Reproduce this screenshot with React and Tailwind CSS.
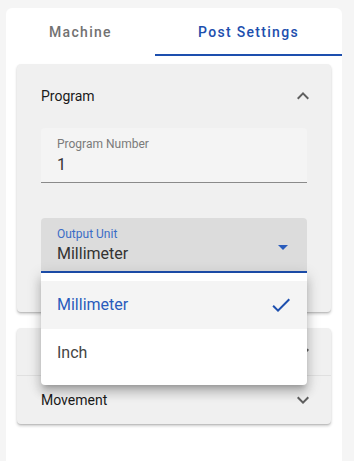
import React from "react";

const font = { fontFamily: "Roboto, 'Liberation Sans', sans-serif" };

function ChevronUp() {
  return (
    <svg width="24" height="24" viewBox="0 0 24 24" className="fill-[#5f5f5f]">
      <path d="M7.41 15.41 12 10.83l4.59 4.58L18 14l-6-6-6 6z" />
    </svg>
  );
}

function ChevronDown() {
  return (
    <svg width="24" height="24" viewBox="0 0 24 24" className="fill-[#5f5f5f]">
      <path d="M7.41 8.59 12 13.17l4.59-4.58L18 10l-6 6-6-6z" />
    </svg>
  );
}

export default function App() {
  const [unit, setUnit] = React.useState("Millimeter");

  return (
    <div className="min-h-[461px] bg-[#f5f5f5] pl-[6px] pr-[12px] pt-[8px]" style={font}>
      <div className="min-h-[453px] rounded-t-md bg-white">
        {/* tabs */}
        <div className="flex h-[48px]">
          <button className="flex w-[149px] items-center justify-center text-[14px] font-medium tracking-[1.3px] text-[#727272]">
            Machine
          </button>
          <button className="relative flex flex-1 items-center justify-center text-[14px] font-medium tracking-[1.3px] text-[#1d4fae]">
            Post Settings
            <span className="absolute bottom-0 left-0 right-0 h-[2px] bg-[#1d4fae]" />
          </button>
        </div>

        <div className="px-[11px] pt-[8px]">
          {/* Program panel */}
          <div className="rounded bg-[#f0f0f0] shadow-[0_2px_3px_rgba(0,0,0,0.2),0_1px_1px_rgba(0,0,0,0.1)]">
            <div className="flex h-[64px] items-center justify-between pl-[24px] pr-[16px]">
              <span className="text-[14px] text-[#1a1a1a]">Program</span>
              <ChevronUp />
            </div>
            <div className="px-[24px] pb-[39px]">
              <div className="h-[55px] rounded-t bg-[#f4f4f4] border-b border-[#8a8a8a] px-[16px] pt-[8px]">
                <div className="text-[12px] leading-[16px] text-[#7a7a7a]">Program Number</div>
                <div className="mt-[2px] text-[16px] leading-[22px] text-[#333]">1</div>
              </div>
              <div className="relative mt-[35px]">
                <div className="flex h-[55px] items-start justify-between rounded-t bg-[#dcdcdc] border-b-2 border-[#1d4fae] pl-[16px] pr-[12px] pt-[8px]">
                  <div>
                    <div className="text-[12px] leading-[16px] text-[#3a6cc6]">Output Unit</div>
                    <div className="mt-[1px] text-[16px] leading-[22px] text-[#333]">{unit}</div>
                  </div>
                  <svg width="24" height="24" viewBox="0 0 24 24" className="mt-[9px] fill-[#2a5cbc]">
                    <path d="M7 10l5 5 5-5z" />
                  </svg>
                </div>
                {/* menu */}
                <div className="absolute left-0 right-0 top-[55px] z-10 rounded-b bg-white py-[8px] shadow-[0_5px_5px_-3px_rgba(0,0,0,0.2),0_8px_10px_1px_rgba(0,0,0,0.14),0_3px_14px_2px_rgba(0,0,0,0.12)]">
                  {["Millimeter", "Inch"].map(u => (
                    <div
                      key={u}
                      onClick={() => setUnit(u)}
                      className={`flex h-[48px] items-center justify-between pl-[16px] pr-[14px] text-[16px] ${
                        u === unit ? "bg-[#f4f4f4] text-[#2a5cbc]" : "text-[#444]"
                      }`}
                    >
                      <span>{u}</span>
                      {u === unit && (
                        <svg width="24" height="24" viewBox="0 0 24 24" className="fill-[#1d4fae]">
                          <path d="M9 16.17 4.83 12l-1.42 1.41L9 19 21 7l-1.41-1.41z" />
                        </svg>
                      )}
                    </div>
                  ))}
                </div>
              </div>
            </div>
          </div>

          {/* second panel */}
          <div className="mt-[16px] rounded bg-[#f0f0f0] shadow-[0_2px_3px_rgba(0,0,0,0.2),0_1px_1px_rgba(0,0,0,0.1)]">
            {/* header row hidden behind the open menu */}
            <div className="flex h-[48px] items-center justify-end border-b border-[#e0e0e0] pl-[24px] pr-[16px]">
              <ChevronDown />
            </div>
            <div className="flex h-[48px] items-center justify-between pl-[24px] pr-[16px]">
              <span className="text-[14px] text-[#1a1a1a]">Movement</span>
              <ChevronDown />
            </div>
          </div>
        </div>
      </div>
    </div>
  );
}
